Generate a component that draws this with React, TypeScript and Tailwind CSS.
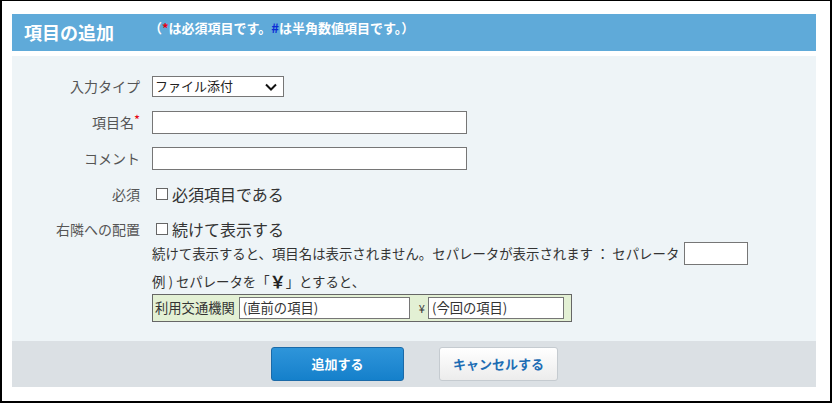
const font = { fontFamily: '"Noto Sans CJK JP", "Noto Sans", sans-serif' };

const Label = ({ children }: { children: React.ReactNode }) => (
  <div className="w-[128px] shrink-0 text-right text-[14px] text-[#555]">{children}</div>
);

const Check = ({ label }: { label: string }) => (
  <label className="flex items-center text-[16px] text-[#333]">
    <span className="ml-[4px] mr-[4px] inline-block h-[12px] w-[12px] border border-[#666] bg-white" />
    {label}
  </label>
);

const App = () => {
  return (
    <div
      style={font}
      className="box-border h-[403px] w-[832px] border-t border-r-2 border-b-2 border-l-2 border-black bg-white pt-[13px] pr-[14px] pl-[10px]"
    >
      {/* ヘッダー */}
      <div className="flex h-[37px] items-start bg-[#5faad9] pl-[12px] text-white">
        <h1 className="mt-[6px] text-[18px] font-bold leading-[24px]">項目の追加</h1>
        <p className="ml-[35px] mt-[5px] text-[13px] font-bold leading-[18px]">
          （<span className="text-[#e60012]">*</span>は必須項目です。
          <span className="text-[#0a2bd6]">#</span>は半角数値項目です。）
        </p>
      </div>

      {/* フォーム */}
      <div className="mt-[5px] h-[285px] bg-[#eef4f7] pt-[12px]">
        <div className="flex h-[36px] items-center gap-[12px]">
          <Label>入力タイプ</Label>
          <div className="relative flex h-[21px] w-[132px] items-center border border-[#767676] bg-white pl-[2px] text-[13px] text-[#222]">
            ファイル添付
            <svg
              className="absolute right-[6px] top-[6px]"
              width="12"
              height="8"
              viewBox="0 0 12 8"
              fill="none"
              stroke="#111"
              strokeWidth="2"
            >
              <path d="M1 1.5 6 6.5 11 1.5" />
            </svg>
          </div>
        </div>

        <div className="flex h-[36px] items-center gap-[12px]">
          <Label>
            項目名<span className="relative -top-[3px] text-[13px] text-[#e60012]">*</span>
          </Label>
          <div className="h-[23px] w-[315px] border border-[#767676] bg-white" />
        </div>

        <div className="flex h-[36px] items-center gap-[12px]">
          <Label>コメント</Label>
          <div className="h-[23px] w-[315px] border border-[#767676] bg-white" />
        </div>

        <div className="flex h-[36px] items-center gap-[12px]">
          <Label>必須</Label>
          <Check label="必須項目である" />
        </div>

        {/* 右隣への配置 */}
        <div className="flex gap-[12px] pt-[5px]">
          <div className="flex h-[24px] items-center">
            <Label>右隣への配置</Label>
          </div>
          <div className="flex flex-col text-[13.4px] text-[#333]">
            <div className="flex h-[24px] items-center">
              <Check label="続けて表示する" />
            </div>
            <div className="flex h-[24px] items-center">
              続けて表示すると、項目名は表示されません。セパレータが表示されます&nbsp;：&nbsp;セパレータ
              <div className="ml-[5px] h-[23px] w-[64px] border border-[#767676] bg-white" />
            </div>
            <div className="flex h-[29px] items-center pt-[3px]">
              例 ) セパレータを「<b className="text-[16px] text-[#222]">￥</b>」とすると、
            </div>
            <div className="flex h-[28px] w-[420px] items-center border border-[#666] bg-[#e3f0d4] pl-[2px] text-[13.3px] text-[#333]">
              利用交通機関
              <div className="ml-[4px] flex h-[22px] w-[171px] items-center border border-[#767676] bg-white pl-[3px]">
                (直前の項目)
              </div>
              <span className="ml-[9px] mr-[3px] text-[11px]">¥</span>
              <div className="flex h-[22px] w-[136px] items-center border border-[#767676] bg-white pl-[3px]">
                (今回の項目)
              </div>
            </div>
          </div>
        </div>
      </div>

      {/* ボタン */}
      <div className="flex h-[46px] items-center justify-center gap-[35px] bg-[#dbe0e4] pl-[1px]">
        <button className="h-[34px] w-[133px] rounded-[3px] border border-[#1b6aa8] bg-gradient-to-b from-[#2e95da] to-[#1480cb] text-[13px] font-bold text-white">
          追加する
        </button>
        <button className="h-[34px] w-[119px] rounded-[3px] border border-[#c5cbd0] bg-gradient-to-b from-white to-[#ececec] text-[13px] font-bold text-[#1d6db4]">
          キャンセルする
        </button>
      </div>
    </div>
  );
};

export default App;
